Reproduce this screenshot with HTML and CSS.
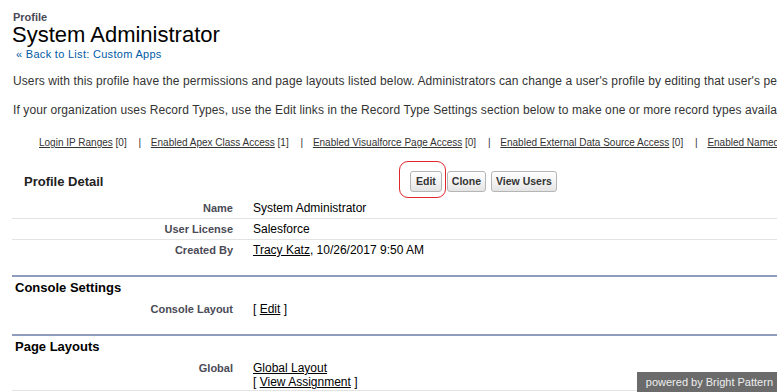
FILE: index.html
```html
<!DOCTYPE html>
<html lang="en">
<head>
  <meta charset="UTF-8" />
  <title>Profile: System Administrator</title>
  <link rel="stylesheet" href="styles.css">
</head>
<body>
  <div class="page">
    <div class="page-head">
      <div class="page-type">Profile</div>
      <h1>System Administrator</h1>
      <a class="back" href="#">&laquo; Back to List: Custom Apps</a>
    </div>

    <p class="intro">Users with this profile have the permissions and page layouts listed below. Administrators can change a user's profile by editing that user's personal information.</p>
    <p class="intro">If your organization uses Record Types, use the Edit links in the Record Type Settings section below to make one or more record types available to users with this profile.</p>

    <div class="related">
      <a href="#">Login IP Ranges</a> [0] <span class="sep">|</span>
      <a href="#">Enabled Apex Class Access</a> [1] <span class="sep">|</span>
      <a href="#">Enabled Visualforce Page Access</a> [0] <span class="sep">|</span>
      <a href="#">Enabled External Data Source Access</a> [0] <span class="sep">|</span>
      <a href="#">Enabled Named Credential Access</a> [0]
    </div>

    <div class="detail">
      <div class="detail-head">
        <h2>Profile Detail</h2>
        <div class="buttons">
          <span class="focus"><button>Edit</button></span>
          <button>Clone</button>
          <button>View Users</button>
        </div>
      </div>
      <div class="row">
        <div class="label">Name</div>
        <div class="value">System Administrator</div>
      </div>
      <div class="row">
        <div class="label">User License</div>
        <div class="value">Salesforce</div>
      </div>
      <div class="row last">
        <div class="label">Created By</div>
        <div class="value"><a href="#">Tracy Katz</a>, 10/26/2017 9:50 AM</div>
      </div>

      <h3 class="section">Console Settings</h3>
      <div class="row last">
        <div class="label">Console Layout</div>
        <div class="value">[ <a href="#">Edit</a> ]</div>
      </div>

      <h3 class="section">Page Layouts</h3>
      <div class="row end">
        <div class="label">Global</div>
        <div class="value"><a href="#">Global Layout</a><br>[ <a href="#">View Assignment</a> ]</div>
      </div>
    </div>
  </div>

  <div class="powered">powered by Bright Pattern</div>
</body>
</html>
```

FILE: styles.css
```css
:root {
  --text: #222;
  --label: #4a4a56;
  --link: #015ba7;
  --line: #e3e3e3;
  --section: #8e9dbe;
}
body {
  margin: 0;
  background: #fff;
  font-family: 'Liberation Sans', Arial, sans-serif;
  color: var(--text);
  overflow: hidden;
}
.page {
  padding: 11px 0 0 12px;
  width: 1100px;
}
.page-type {
  font-size: 11px;
  font-weight: bold;
  color: var(--label);
  padding-left: 1px;
}
h1 {
  margin: 0;
  font-size: 22px;
  font-weight: normal;
  line-height: 24px;
  color: #000;
}
.back {
  display: block;
  margin: 1px 0 0 4px;
  font-size: 11px;
  letter-spacing: 0.3px;
  color: var(--link);
  text-decoration: none;
}
.intro {
  margin: 13px 0 0 1px;
  font-size: 12px;
  letter-spacing: 0.1px;
  color: #333;
  white-space: nowrap;
  line-height: 17px;
}
.intro + .intro {
  margin-top: 12px;
}
.related {
  margin: 18px 0 0 27px;
  font-size: 10px;
  color: #333;
  white-space: nowrap;
}
.related a {
  color: #333;
}
.related .sep {
  margin: 0 7px 0 9px;
}
.detail-head {
  display: flex;
  align-items: center;
  margin: 22px 0 6px;
  height: 22px;
}
.detail-head h2 {
  margin: 0 0 0 12px;
  font-size: 13px;
  width: 386px;
}
.buttons {
  display: flex;
  gap: 5px;
}
.focus {
  position: relative;
  display: flex;
}
.focus::before {
  content: "";
  position: absolute;
  left: -11px;
  top: -10px;
  width: 45px;
  height: 35px;
  border: 1px solid #e0282e;
  border-radius: 9px;
}
button {
  font-family: 'Liberation Sans', Arial, sans-serif;
  font-size: 10.5px;
  font-weight: bold;
  color: #333;
  background: linear-gradient(#fff, #f0f0f0 60%, #e4e4e4);
  border: 1px solid #b5b5b5;
  border-radius: 3px;
  padding: 0 4px;
  height: 21px;
}
.focus button {
  padding: 0 5px;
}
.row {
  display: flex;
  border-bottom: 1px solid var(--line);
  padding: 3px 0;
  font-size: 12px;
  line-height: 14px;
}
.row.last {
  border-bottom: none;
  padding-bottom: 18px;
}
.row.end {
  padding-bottom: 1px;
}
.label {
  width: 221px;
  text-align: right;
  font-size: 11px;
  font-weight: bold;
  color: var(--label);
}
.value {
  padding-left: 20px;
  color: #000;
}
.value a {
  color: #000;
}
.section {
  margin: 0;
  border-top: 2px solid var(--section);
  padding: 3px 0 4px 3px;
  font-size: 13px;
  line-height: 15px;
  color: #000;
}
.powered {
  position: fixed;
  right: 0;
  bottom: 0;
  background: #6b6b6b;
  color: #eee;
  font-family: 'Liberation Sans', Arial, sans-serif;
  font-size: 11px;
  line-height: 14px;
  white-space: nowrap;
  padding: 3px 4px 3px 9px;
}
```
